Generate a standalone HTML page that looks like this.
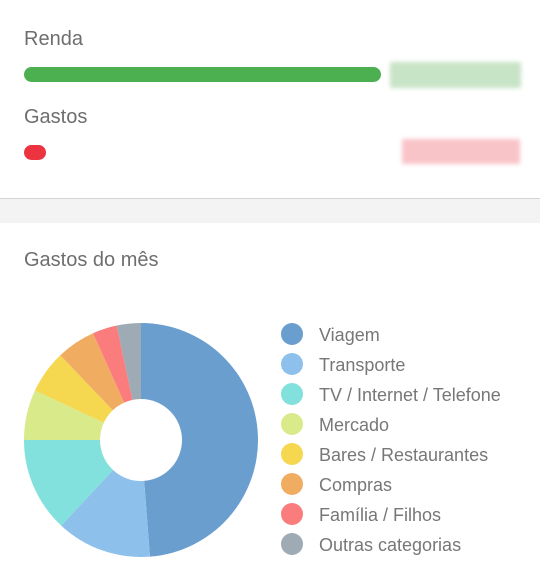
<!DOCTYPE html>
<html><head><meta charset="utf-8"><style>
body{margin:0;width:540px;height:588px;overflow:hidden;background:#fff;font-family:"Liberation Sans",sans-serif;position:relative}
.a{position:absolute}
.t{color:#6e6e6e;font-size:20px}
.lg{position:absolute;left:281px;font-size:18px;color:#777;height:30px;line-height:30px}
.lg i{position:absolute;left:0;top:4px;width:22px;height:22px;border-radius:50%}
.lg span{position:absolute;left:38px;top:1px;white-space:nowrap}
</style></head><body>
<div class="a t" style="left:24px;top:28px">Renda</div>
<div class="a" style="left:24px;top:67px;width:357px;height:15px;border-radius:8px;background:#4caf50"></div>
<div class="a" style="left:390px;top:62px;width:131px;height:26px;background:#c8e4c6;filter:blur(2px)"></div>
<div class="a t" style="left:24px;top:106px">Gastos</div>
<div class="a" style="left:24px;top:145px;width:22px;height:15px;border-radius:8px;background:#ec3340"></div>
<div class="a" style="left:402px;top:139px;width:118px;height:25px;background:#f9c4c8;filter:blur(2px)"></div>
<div class="a" style="left:0;top:198px;width:540px;height:24px;background:#f3f3f3;border-top:1px solid #d4d4d4"></div>
<div class="a t" style="left:24px;top:249px">Gastos do mês</div>
<svg class="a" style="left:0;top:0" width="280" height="588" id="s"></svg>
<div class="lg" style="top:319px"><i style="background:#6a9ecf"></i><span>Viagem</span></div>
<div class="lg" style="top:349px"><i style="background:#8ec0ec"></i><span>Transporte</span></div>
<div class="lg" style="top:379px"><i style="background:#82e1dc"></i><span>TV / Internet / Telefone</span></div>
<div class="lg" style="top:409px"><i style="background:#d8ea8a"></i><span>Mercado</span></div>
<div class="lg" style="top:439px"><i style="background:#f5d750"></i><span>Bares / Restaurantes</span></div>
<div class="lg" style="top:469px"><i style="background:#f0ad62"></i><span>Compras</span></div>
<div class="lg" style="top:499px"><i style="background:#fb7c7c"></i><span>Família / Filhos</span></div>
<div class="lg" style="top:529px"><i style="background:#9eaab4"></i><span>Outras categorias</span></div>
<script>
var cx=141,cy=440,R=117,r=41;
var b=[0,175.6,223,270,295,316.4,335.8,348,360];
var c=["#6a9ecf","#8ec0ec","#82e1dc","#d8ea8a","#f5d750","#f0ad62","#fb7c7c","#9eaab4"];
function p(a,rad){a=a*Math.PI/180;return [cx+rad*Math.sin(a),cy-rad*Math.cos(a)];}
var h="";
for(var i=0;i<8;i++){var a0=b[i],a1=b[i+1],l=(a1-a0)>180?1:0;
var p1=p(a0,R),p2=p(a1,R),p3=p(a1,r),p4=p(a0,r);
h+='<path fill="'+c[i]+'" d="M'+p1+' A'+R+','+R+' 0 '+l+' 1 '+p2+' L'+p3+' A'+r+','+r+' 0 '+l+' 0 '+p4+' Z"/>';}
document.getElementById("s").innerHTML=h;
</script>
</body></html>
